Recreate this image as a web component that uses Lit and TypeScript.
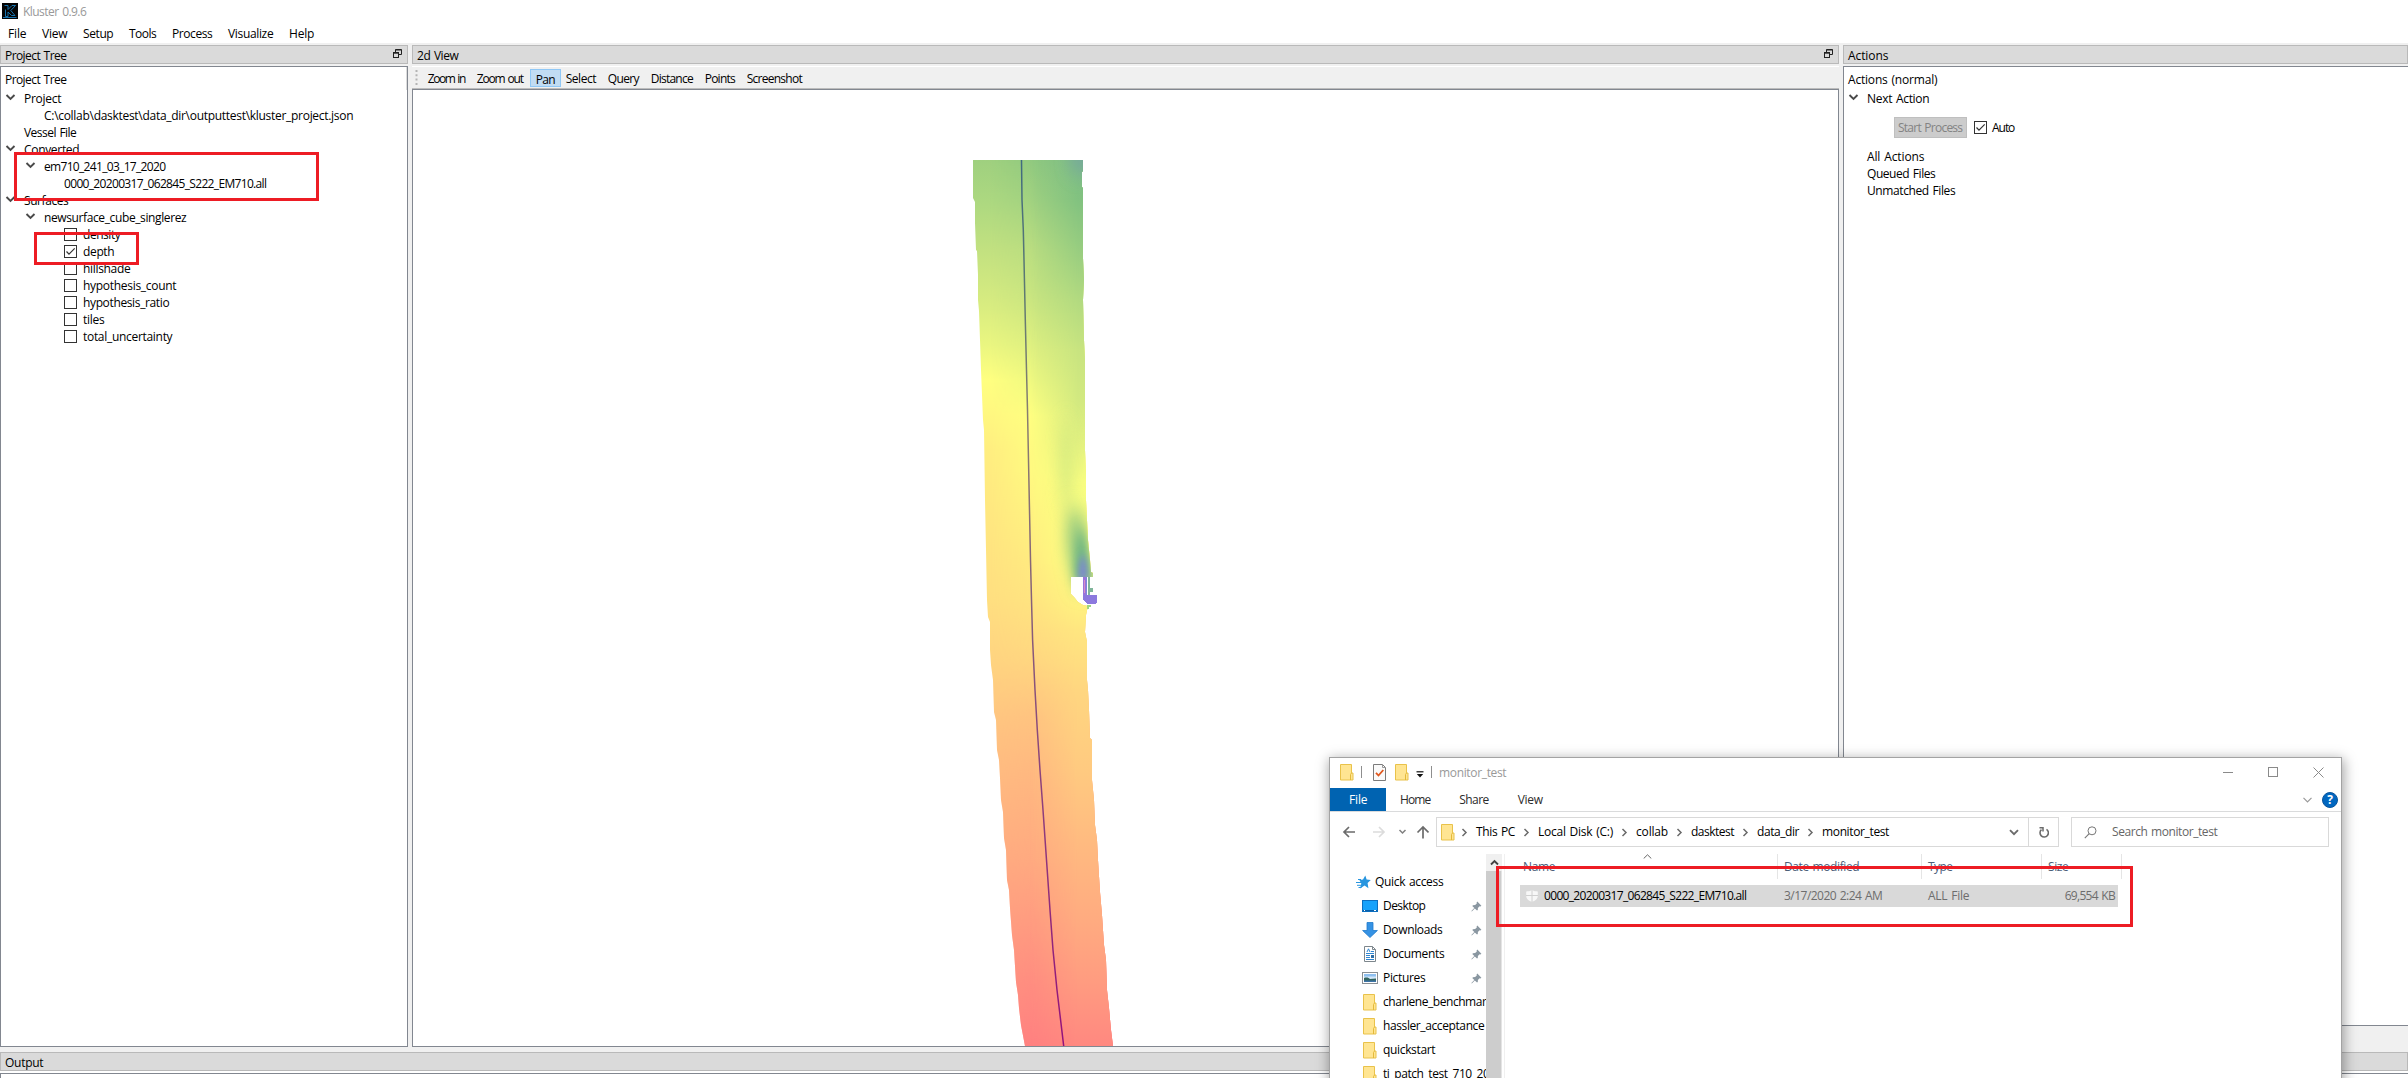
import { LitElement, html, svg, css, nothing } from 'lit';
import { customElement } from 'lit/decorators.js';
import { styleMap } from 'lit/directives/style-map.js';

const FAMILY = '"Open Sans", "Noto Sans", sans-serif';
const pen = document.createElement('canvas').getContext('2d')!;

/** A label tracked so that it takes up the given number of pixels. */
const label = (text: string, width: number) => {
  pen.font = `12px ${FAMILY}`;
  const spaces = text.split(' ').length - 1;
  const tracking = (width + 0.3 - spaces - pen.measureText(text).width) / text.length;
  return html`<span style=${styleMap({ letterSpacing: `${tracking.toFixed(3)}px` })}>${text}</span>`;
};

const shared = css`
  :host { display: block; font: 12px/17px "Open Sans", "Noto Sans", sans-serif; color: #000; }
  * { box-sizing: border-box; }
  svg { display: block; flex: none; }
  span { white-space: pre; word-spacing: 1px; }
`;

const chevronDown = html`<svg width="11" height="9" viewBox="0 0 11 9"><path d="M1.5 2 5.5 6 9.5 2" fill="none" stroke="#4a4a4a" stroke-width="1.9"/></svg>`;

const checkbox = (checked: boolean) => html`<svg width="13" height="13" viewBox="0 0 13 13">
  <rect x=".5" y=".5" width="12" height="12" fill="#fff" stroke="#333"/>
  ${checked ? svg`<path d="M2.5 6.5 5 9.2 10.7 3.4" fill="none" stroke="#333" stroke-width="1.2"/>` : nothing}
</svg>`;

const floatIcon = html`<svg width="9" height="9" viewBox="0 0 9 9" fill="none" stroke="#222">
  <path d="M2.5 3V.5h6v5H6"/><path d="M2.5 1h6" stroke-width="1"/><rect x=".5" y="3.5" width="5" height="5"/><path d="M.5 4.2h5"/>
</svg>`;

const folder = html`<svg width="14" height="17" viewBox="0 0 14 17">
  <path d="M.5.5h11v8.500h1.500v7H.5z" fill="#ffe592" stroke="#e9c24a"/>
  <path d="M10.500 16v-5.500l1-1.500" fill="none" stroke="#e3b93b"/>
</svg>`;

/* ---------- 2d view map ---------- */

type Stop = [number, string];
const TOP = 160;
const BOTTOM = 1046;
const WEST: Stop[] = [[160, '#9fd07f'], [200, '#acd880'], [250, '#c2e180'], [300, '#d6eb80'], [345, '#eaf680'], [380, '#ffff80'], [412, '#fff880'], [450, '#ffee80'], [520, '#ffe780'], [600, '#ffdf80'], [660, '#ffd480'], [735, '#ffc280'], [815, '#ffb480'], [890, '#ffa580'], [965, '#ff9680'], [1046, '#ff8680']];
const MIDDLE: Stop[] = [[160, '#90c97f'], [200, '#a0d180'], [250, '#b9dd80'], [300, '#c9e580'], [350, '#dff080'], [390, '#f2fa80'], [415, '#ffff80'], [470, '#fffb80'], [530, '#fff180'], [600, '#ffe480'], [660, '#ffd680'], [715, '#ffc380'], [775, '#ffb780'], [860, '#ffa980'], [925, '#ff9a80'], [983, '#ff8c80'], [1046, '#ff8080']];
const EAST: Stop[] = [[160, '#7ebd85'], [200, '#82c280'], [250, '#98cd80'], [300, '#b2da80'], [350, '#c8e480'], [400, '#d2e980'], [440, '#e2f180'], [480, '#f8fd80'], [560, '#ffff80'], [600, '#fff380'], [630, '#ffe680'], [690, '#ffd680'], [770, '#ffca80'], [845, '#ffba80'], [920, '#ffab80'], [980, '#ff9c80'], [1046, '#ff8880']];
const TRACK: Stop[] = [[160, '#3f6a80'], [300, '#5f7a72'], [420, '#8a7d70'], [600, '#85607a'], [800, '#8d3f7c'], [1046, '#93107c']];

const ramp = (id: string, stops: Stop[]) => svg`<linearGradient id=${id} gradientUnits="userSpaceOnUse" x1="0" x2="0" y1=${TOP} y2=${BOTTOM}>
  ${stops.map(([y, c]) => svg`<stop offset=${(y - TOP) / (BOTTOM - TOP)} stop-color=${c}/>`)}
</linearGradient>`;

const SWATH = '973,160 973,198 975,202 975,223 976,250 977,251 978,275 978,300 979,311 980,340 981,370 982,395 983,420 984,430 985,500 986,550 987,600 988,617 990,622 990,650 991,665 993,680 994,712 996,720 997,750 999,760 1000,778 1001,800 1003,812 1004,838 1006,850 1007,880 1009,890 1010,908 1012,935 1014,950 1016,982 1018,995 1019,1008 1021,1025 1025,1046 ' +
  '1113,1046 1111,1030 1109,1008 1107,990 1106,960 1104,945 1102,915 1100,892 1098,860 1097,840 1095,825 1094,800 1092,780 1092,740 1090,738 1089,710 1088,690 1087,680 1087,642 1085,632 1086,615 1088,606 1083,605 1078,602 1074,597 1071,594 1071,577 1093,577 1093,573 1091,572 1090,560 1088,540 1087,520 1086,500 1086,475 1085,450 1085,360 1084,340 1083,300 1084,280 1083,258 1083,188 1082,187 1082,172 1083,171 1083,160';

@customElement('map-canvas')
export class MapCanvas extends LitElement {
  static styles = css`:host { display: block; } svg { display: block; width: 100%; height: 100%; }`;
  render() {
    return html`<svg viewBox="413 90 1425 956" preserveAspectRatio="none">
      <defs>
        ${ramp('west', WEST)}${ramp('middle', MIDDLE)}${ramp('east', EAST)}${ramp('track', TRACK)}
        <linearGradient id="f1" gradientUnits="userSpaceOnUse" x1="990" x2="1038" y1="600" y2="600"><stop offset="0" stop-color="#000"/><stop offset="1" stop-color="#fff"/></linearGradient>
        <linearGradient id="f2" gradientUnits="userSpaceOnUse" x1="1030" x2="1078" y1="600" y2="600"><stop offset="0" stop-color="#000"/><stop offset="1" stop-color="#fff"/></linearGradient>
        <mask id="m1" maskUnits="userSpaceOnUse" x="960" y="150" width="170" height="900"><rect x="960" y="150" width="170" height="900" fill="url(#f1)"/></mask>
        <mask id="m2" maskUnits="userSpaceOnUse" x="960" y="150" width="170" height="900"><rect x="960" y="150" width="170" height="900" fill="url(#f2)"/></mask>
        <filter id="b9" x="-1" y="-1" width="3" height="3"><feGaussianBlur stdDeviation="7 11"/></filter>
        <filter id="b5" x="-1" y="-1" width="3" height="3"><feGaussianBlur stdDeviation="4 8"/></filter>
        <filter id="b3" x="-1" y="-1" width="3" height="3"><feGaussianBlur stdDeviation="3 5"/></filter>
        <clipPath id="swath"><polygon points=${SWATH} shape-rendering="crispEdges"/></clipPath>
      </defs>
      <g clip-path="url(#swath)">
        <rect x="960" y="150" width="170" height="900" fill="url(#west)"/>
        <rect x="960" y="150" width="170" height="900" fill="url(#middle)" mask="url(#m1)"/>
        <rect x="960" y="150" width="170" height="900" fill="url(#east)" mask="url(#m2)"/>
        <ellipse cx="1084" cy="158" rx="16" ry="12" fill="#74a4a0" filter="url(#b9)"/>
        <ellipse cx="1066" cy="465" rx="7" ry="45" fill="#cfe780" opacity=".75" filter="url(#b9)"/>
        <path d="M1066 510 1084 512 1094 585 1074 584 1066 550z" fill="#9fce80" filter="url(#b9)"/>
        <path d="M1077 534 1084 532 1092 585 1074 584z" fill="#6db582" filter="url(#b5)"/>
        <path d="M1081 557 1085 557 1088 580 1078 580z" fill="#7f84d8" filter="url(#b3)"/>
      </g>
      <g shape-rendering="crispEdges">
        <path d="M1083 577h3v18h-3z" fill="#9a74dc"/>
        <path d="M1084 580h1v13h-1z" fill="#d48fc8"/>
        <path d="M1088 577h2v11h3v4h-3v3h-2z" fill="#7fb59a"/>
        <path d="M1086 577h1v18h-1z" fill="#7d8ad8"/>
        <path d="M1083 595h13l1 1v6l-1 2h-9l-3-3-1-3z" fill="#8c79de"/>
        <path d="M1087 605h4v2h-2v2h-2z" fill="#9fd582"/>
      </g>
      <polyline points="1021.5,160 1022,200 1023.3,230 1024,260 1025.3,320 1026.5,370 1027.5,410 1028.5,460 1029.5,510 1030.5,560 1031.5,600 1032.6,640 1035,690 1037.3,730 1040,770 1043,810 1046.5,860 1050,910 1053,950 1057,990 1060,1015 1063.7,1046"
        fill="none" stroke="url(#track)" stroke-width="1.500"/>
    </svg>`;
  }
}

/* ---------- dock frame ---------- */

@customElement('dock-panel')
export class DockPanel extends LitElement {
  static properties = { heading: {}, span: { type: Number }, floatable: { type: Boolean } };
  declare heading: string;
  declare span: number;
  declare floatable: boolean;
  static styles = [shared, css`
    :host { display: flex; flex-direction: column; min-width: 0; }
    .bar { display: flex; flex: none; align-items: center; justify-content: space-between; height: 19px; padding: 1px 5px 0 4px;
      background: #dadada; border: 1px solid #b9b9b9; }
    .bar svg { margin-top: -3px; }
    .body { display: flex; flex-direction: column; flex: 1; min-height: 0; margin-top: 2px; }
  `];
  render() {
    return html`<div class="bar">${label(this.heading, this.span)}${this.floatable ? floatIcon : nothing}</div>
      <div class="body"><slot></slot></div>`;
  }
}

/* ---------- file explorer window ---------- */

const pin = html`<svg class="pin" width="11" height="11" viewBox="0 0 11 11"><path d="M6.3.6 10.4 4.7 9.4 5.4 8.6 5.2 6.9 6.9 6.8 9 6 9.6 3.8 7.4.8 10.5.4 10.1 3.3 7 1.3 4.9 2 4.2 4.1 4.1 5.8 2.4 5.6 1.4z" fill="#8a97a1"/></svg>`;
const star = html`<svg width="15" height="14" viewBox="0 0 15 14"><path d="M9.3.4 10.6 4.6 14.8 5 11.6 7.9 12.4 13.2 8.6 10.6 4 13.6 5.3 8.6 3.4 5 7 4.6z" fill="#2795df"/><path d="M2 4.5h3M0 7.5h5M1 10.3h4M2.5 12.5h3" stroke="#2795df" stroke-width="1"/></svg>`;
const desktop = html`<svg width="16" height="12" viewBox="0 0 16 12"><rect x=".5" y=".5" width="15" height="11" fill="#16a2fb" stroke="#0b6fc0"/><path d="M1 10.5h14" stroke="#0a5ea8"/><path d="M2 10.5h1M12 10.5h2" stroke="#fff"/></svg>`;
const download = html`<svg width="16" height="16" viewBox="0 0 16 16"><path d="M5 .5h6v8h4.4L8 15.5.6 8.500H5z" fill="#3592e4" stroke="#1f7acb" stroke-width=".8"/></svg>`;
const documents = html`<svg width="12" height="16" viewBox="0 0 12 16"><path d="M.5.5h8l3 3v12H.5z" fill="#fff" stroke="#7d868c"/><path d="M8.500.5v3h3" fill="none" stroke="#7d868c"/><path d="M3 6 4.500 2.800 6 6M7 5.500h3M2 7.500h8M2 9.500h4M2 11.500h4M2 13.500h8" stroke="#2f86d2" fill="none"/><path d="M7 9h3v3H7z" fill="#2d6fa8"/></svg>`;
const pictures = html`<svg width="16" height="12" viewBox="0 0 16 12"><rect x=".5" y=".5" width="15" height="11" fill="#fff" stroke="#8a8f94"/><path d="M2 2h12v8H2z" fill="#8fc0f0"/><path d="M2 4.500h12V7H2z" fill="#d4e8fa"/><path d="M2 6c3-1 5 0 6 1l6-.5V10H2z" fill="#33655f"/><path d="M2 8.500h12V10H2z" fill="#3e74a8"/></svg>`;
const crumbArrow = html`<svg class="crumb" width="23" height="9" viewBox="0 0 23 9"><path d="M9.500 1 13 4.500 9.500 8" fill="none" stroke="#6a6a6a" stroke-width="1.500"/></svg>`;

@customElement('explorer-window')
export class ExplorerWindow extends LitElement {
  static styles = [shared, css`
    :host { display: flex; flex-direction: column; background: #fff; border: 1px solid #a3a3a3; }
    .title { display: flex; align-items: center; height: 30px; flex: none; padding: 0 0 2px 10px; color: #999; }
    .sep { width: 1px; height: 12px; background: #8e8e8e; }
    .title .folder1 { margin-right: 7px; }
    .title .doc { margin: 0 9px 0 11px; }
    .title .drop { margin: 4px 7px 0 7px; }
    .title .sep2 { margin-right: 7px; }
    .controls { display: flex; align-items: center; margin: 0 17px 0 auto; gap: 35px; }
    .tabs { display: flex; align-items: center; height: 24px; flex: none; border-bottom: 1px solid #dadbdc; color: #2b2b2b; }
    .file { width: 56px; height: 23px; background: #0063b1; color: #fff; padding: 3px 0 0 19px; margin-right: 14px; }
    .tabs .gap { margin-right: 29px; }
    .help { width: 16px; height: 16px; border-radius: 8px; background: #0067c0; border: 1px solid #0a559c; color: #fff; font-weight: 700; line-height: 14px; text-align: center; margin: 0 3px 0 10px; }
    .tabs .fold { margin-left: auto; }
    .nav { display: flex; align-items: center; height: 42px; flex: none; padding: 0 12px 2px 12px; }
    .nav span { padding-bottom: 1px; }
    .box { display: flex; align-items: center; height: 30px; border: 1px solid #d9d9d9; }
    .address { width: 623px; margin-left: 7px; padding-left: 4px; }
    .address .lead { margin-right: -2px; }
    .address .more { margin-left: auto; margin-right: 9px; }
    .refresh { display: flex; align-items: center; justify-content: center; width: 30px; height: 28px; border-left: 1px solid #d9d9d9; }
    .search { width: 258px; margin-left: 12px; padding-left: 12px; gap: 15px; color: #666; }
    .main { display: flex; flex: 1; min-height: 0; }
    .side { width: 156px; flex: none; padding-top: 16px; overflow: hidden; }
    .row { display: flex; align-items: center; height: 24px; padding-left: 32px; overflow: hidden; }
    .row span { padding-bottom: 1px; }
    .row.top { padding-left: 26px; gap: 4px; }
    .ico { display: flex; justify-content: center; width: 16px; flex: none; margin-right: 5px; }
    .row .pin { margin: 0 4px 0 auto; }
    .scroll { width: 16px; flex: none; background: #f0f0f0; display: flex; flex-direction: column; align-items: center; }
    .arrow { height: 17px; padding-top: 4px; }
    .thumb { width: 16px; flex: 1; background: #cdcdcd; border-right: 1px solid #e4e4e4; }
    .files { flex: 1; margin-left: 2px; border-left: 1px solid #f0f0f0; }
    .head { display: flex; height: 25px; color: #4c607a; }
    .head div { display: flex; align-items: center; border-right: 1px solid #e5e5e5; padding-left: 6px; }
    .head .name { width: 273px; padding-left: 18px; }
    .head .name svg { margin: -20px 0 0 88px; }
    .date { width: 144px; } .type { width: 120px; } .size { width: 80px; }
    .item { display: flex; align-items: center; height: 22px; width: 598px; margin: 6px 0 0 15px; padding: 0 3px 1px 6px; background: #d9d9d9; color: #6d6d6d; }
    .item .fname { width: 240px; color: #000; margin-left: 6px; }
    .item .date { width: 144px; }
    .item .size { margin-left: auto; width: auto; }
  `];
  render() {
    const quick: [unknown, string, number, boolean][] = [
      [desktop, 'Desktop', 42, true], [download, 'Downloads', 59, true], [documents, 'Documents', 61, true], [pictures, 'Pictures', 42, true],
      [folder, 'charlene_benchmark', 109, false], [folder, 'hassler_acceptance', 101, false], [folder, 'quickstart', 52, false], [folder, 'tj_patch_test_710_2020', 119, false],
    ];
    const crumbs: [string, number][] = [['This PC', 39], ['Local Disk (C:)', 75], ['collab', 32], ['dasktest', 43], ['data_dir', 42], ['monitor_test', 67]];
    return html`
      <div class="title">
        <div class="folder1">${folder}</div><div class="sep"></div>
        <svg class="doc" width="13" height="17" viewBox="0 0 13 17"><path d="M.5.5h9l3 3v13H.5z" fill="#fafafa" stroke="#7b7b7b"/><path d="M9.500.5v3h3" fill="none" stroke="#9a9a9a"/><path d="M3 8.800 5.500 11.500 10.300 6" fill="none" stroke="#e0571d" stroke-width="1.800"/></svg>
        ${folder}
        <svg class="drop" width="8" height="7" viewBox="0 0 8 7"><path d="M.5.800h7" stroke="#111" stroke-width="1.200"/><path d="M.8 3h6.400L4 6.400z" fill="#111"/></svg>
        <div class="sep sep2"></div>
        ${label('monitor_test', 67)}
        <div class="controls">
          <svg width="10" height="10" viewBox="0 0 10 10"><path d="M0 5.500h10" stroke="#8a8a8a"/></svg>
          <svg width="10" height="10" viewBox="0 0 10 10"><rect x=".5" y=".5" width="9" height="9" fill="none" stroke="#8a8a8a"/></svg>
          <svg width="11" height="11" viewBox="0 0 11 11"><path d="M.5.5l10 10M10.500.5l-10 10" stroke="#8a8a8a"/></svg>
        </div>
      </div>
      <div class="tabs">
        <div class="file">${label('File', 18)}</div>
        <div class="gap">${label('Home', 30)}</div><div class="gap">${label('Share', 29)}</div><div>${label('View', 25)}</div>
        <svg class="fold" width="9" height="6" viewBox="0 0 9 6"><path d="M.5.800 4.500 4.800 8.500.800" fill="none" stroke="#9a9a9a" stroke-width="1.200"/></svg>
        <div class="help">?</div>
      </div>
      <div class="nav">
        <svg width="87" height="14" viewBox="0 0 87 14" fill="none" stroke-width="1.700">
          <path d="M13 7H2M7 2 2 7l5 5" stroke="#6b6b6b"/><path d="M31 7h11M37 2l5 5-5 5" stroke="#dcdcdc"/>
          <path d="M57.500 5 60.500 8 63.500 5" stroke="#808080" stroke-width="1.500"/><path d="M81 13.500V2M75.500 7.500 81 2l5.500 5.500" stroke="#6b6b6b"/>
        </svg>
        <div class="box address">
          <div class="lead">${folder}</div>${crumbs.map(([name, w]) => html`${crumbArrow}${label(name, w - 0.3)}`)}
          <svg class="more" width="10" height="7" viewBox="0 0 10 7"><path d="M1 1.200 5 5.200 9 1.200" fill="none" stroke="#6b6b6b" stroke-width="1.900"/></svg>
          <div class="refresh"><svg width="11" height="12" viewBox="0 0 11 12"><path d="M8.500 3.300a4.200 4.200 0 1 1-5 .3" fill="none" stroke="#6b6b6b" stroke-width="1.600"/><path d="M1.500 1.800H5V5.500" fill="none" stroke="#6b6b6b" stroke-width="1.500"/></svg></div>
        </div>
        <div class="box search">
          <svg width="13" height="13" viewBox="0 0 13 13"><circle cx="8" cy="4.800" r="4" fill="none" stroke="#777"/><path d="M5.200 7.700.800 12.200" stroke="#777" stroke-width="1.100"/></svg>
          ${label('Search monitor_test', 105)}
        </div>
      </div>
      <div class="main">
        <div class="side">
          <div class="row top">${star}${label('Quick access', 68)}</div>
          ${quick.map(([icon, name, w, pinned]) => html`<div class="row"><div class="ico">${icon}</div>${label(name, w)}${pinned ? pin : nothing}</div>`)}
        </div>
        <div class="scroll">
          <div class="arrow"><svg width="9" height="9" viewBox="0 0 9 9"><path d="M1 6.500 4.500 3 8 6.500" fill="none" stroke="#444" stroke-width="1.900"/></svg></div>
          <div class="thumb"></div>
        </div>
        <div class="files">
          <div class="head">
            <div class="name">${label('Name', 32)}<svg width="9" height="5" viewBox="0 0 9 5"><path d="M.7 4.500 4.500.800 8.300 4.500" fill="none" stroke="#666"/></svg></div>
            <div class="date">${label('Date modified', 75)}</div>
            <div class="type">${label('Type', 24)}</div>
            <div class="size">${label('Size', 20)}</div>
          </div>
          <div class="item">
            <svg width="12" height="12" viewBox="0 0 12 12"><path d="M6 0c2 1.200 4 1.400 5.800 1.400V6c0 3-3 5-5.800 6C3.200 11 .2 9 .2 6V1.400C2 1.400 4 1.200 6 0z" fill="#f7f7f7"/><path d="M6 0v12M0 5.500h12" stroke="#d0d0d0"/></svg>
            <div class="fname">${label('0000_20200317_062845_S222_EM710.all', 202)}</div>
            <div class="date">${label('3/17/2020 2:24 AM', 98)}</div>
            <div>${label('ALL File', 41)}</div>
            <div class="size">${label('69,554 KB', 50)}</div>
          </div>
        </div>
      </div>`;
  }
}

/* ---------- application ---------- */

interface Node { text: string; width: number; depth: number; open?: boolean; checked?: boolean; }

@customElement('app-root')
export class AppRoot extends LitElement {
  static styles = [shared, css`
    :host { display: block; }
    .app { position: relative; display: flex; flex-direction: column; width: 2408px; height: 1078px; overflow: hidden; background: #fff; }
    .title { display: flex; align-items: center; gap: 5px; height: 25px; padding: 0 0 2px 2px; color: #999; flex: none; }
    .title svg { margin-top: -1px; }
    .menu { display: flex; gap: 15.7px; height: 18px; padding-left: 8px; flex: none; }
    .work { display: flex; gap: 4px; flex: none; height: 1009px; padding-top: 2px; background: #f0f0f0; }
    .tree-dock { width: 408px; height: 1002px; }
    .map-dock { width: 1427px; height: 1002px; }
    .action-dock { flex: 1; height: 981px; }
    .frame { flex: 1; background: #fff; border: 1px solid #828790; min-height: 0; }
    .action-dock .frame { border-right: 0; }
    .header { height: 23px; padding: 4px 0 0 4px; }
    .tree-dock .header { border-right: 1px solid #dcdcdc; }
    .node { display: flex; align-items: center; height: 17px; }
    .twig { width: 20px; height: 17px; flex: none; padding: 3px 0 0 1px; }
    .twig.inner { margin-left: 20px; }
    .in0 { padding-left: 3px; } .in1 { padding-left: 3px; } .in2 { padding-left: 43px; }
    .pad { width: 20px; flex: none; }
    .node .box { padding-bottom: 1px; margin-right: 6px; }
    .tools { display: flex; align-items: center; height: 23px; padding: 0 0 0 3px; background: #f0f0f0; border-top: 1px solid #fff; border-bottom: 1px solid #bcbcbc; gap: 11.7px; flex: none; }
    .tools svg { margin-right: -2px; }
    .tool { padding-top: 1px; }
    .pan { height: 18px; padding: 1px 5px 0; background: #c1dcf3; border: 1px solid #90c8f6; margin: 0 -7px 0 -5px; }
    .run { display: flex; align-items: center; height: 41px; padding-left: 50px; gap: 5px; }
    .start { height: 21px; width: 73px; background: #cccccc; border: 1px solid #bfbfbf; color: #838383; padding: 1px 0 0 3px; margin-right: 2px; }
    .output { flex: 1; }
    .output .frame { border-right: 0; border-bottom: 0; }
    .mark { position: absolute; border: 3px solid #ed1c24; }
    .m1 { left: 14px; top: 152px; width: 305px; height: 49px; }
    .m2 { left: 34px; top: 232px; width: 105px; height: 33px; }
    .m3 { left: 1496px; top: 866px; width: 637px; height: 61px; }
    explorer-window { position: absolute; left: 1329px; top: 757px; width: 1013px; height: 330px; box-shadow: 1px 3px 12px 1px rgba(0,0,0,.36); }
  `];

  private nodes: Node[] = [
    { text: 'Project', width: 37, depth: 0, open: true },
    { text: 'C:\\collab\\dasktest\\data_dir\\outputtest\\kluster_project.json', width: 309, depth: 1 },
    { text: 'Vessel File', width: 52, depth: 0 },
    { text: 'Converted', width: 55, depth: 0, open: true },
    { text: 'em710_241_03_17_2020', width: 121, depth: 1, open: true },
    { text: '0000_20200317_062845_S222_EM710.all', width: 202, depth: 2 },
    { text: 'Surfaces', width: 44, depth: 0, open: true },
    { text: 'newsurface_cube_singlerez', width: 142, depth: 1, open: true },
    { text: 'density', width: 37, depth: 2, checked: false },
    { text: 'depth', width: 31, depth: 2, checked: true },
    { text: 'hillshade', width: 47, depth: 2, checked: false },
    { text: 'hypothesis_count', width: 93, depth: 2, checked: false },
    { text: 'hypothesis_ratio', width: 86, depth: 2, checked: false },
    { text: 'tiles', width: 21, depth: 2, checked: false },
    { text: 'total_uncertainty', width: 89, depth: 2, checked: false },
  ];

  private node(n: Node) {
    return html`<div class="node in${n.depth}">
      ${n.depth < 2 ? html`<div class="twig ${n.depth ? 'inner' : ''}">${n.open ? chevronDown : nothing}</div>` : html`<div class="pad"></div>`}
      ${n.checked === undefined ? nothing : html`<div class="box">${checkbox(n.checked)}</div>`}
      ${label(n.text, n.width)}
    </div>`;
  }

  render() {
    const menu: [string, number][] = [['File', 18], ['View', 25], ['Setup', 30], ['Tools', 27], ['Process', 40], ['Visualize', 45], ['Help', 25]];
    const tools: [string, number][] = [['Zoom in', 37], ['Zoom out', 46], ['Pan', 19], ['Select', 30], ['Query', 31], ['Distance', 42], ['Points', 30], ['Screenshot', 55]];
    return html`<div class="app">
      <div class="title">
        <svg width="16" height="16" viewBox="0 0 16 16"><path d="M0 0h16v16H0z" fill="#050505"/><path d="M2.500 2.500h3.500v4L10 2.500h3.500L8.800 7.500l4.200 5h-3.500L6 9v4.500H3.500V6.500M1 14.500h13.500" fill="none" stroke="#1a7fc0" stroke-width=".9"/></svg>
        ${label('Kluster 0.9.6', 63)}
      </div>
      <div class="menu">${menu.map(([m, w]) => label(m, w))}</div>
      <div class="work">
        <dock-panel class="tree-dock" .heading=${'Project Tree'} .span=${61} floatable>
          <div class="frame">
            <div class="header">${label('Project Tree', 61)}</div>
            ${this.nodes.map((n) => this.node(n))}
          </div>
        </dock-panel>
        <dock-panel class="map-dock" .heading=${'2d View'} .span=${41} floatable>
          <div class="tools">
            <svg width="3" height="15" viewBox="0 0 3 15"><path d="M1.500 0v15" stroke="#b4b4b4" stroke-width="2" stroke-dasharray="2 2.300"/></svg>
            ${tools.map(([t, w]) => html`<div class=${t === 'Pan' ? 'pan' : 'tool'}>${label(t, w)}</div>`)}
          </div>
          <map-canvas class="frame"></map-canvas>
        </dock-panel>
        <dock-panel class="action-dock" .heading=${'Actions'} .span=${40}>
          <div class="frame">
            <div class="header">${label('Actions (normal)', 89)}</div>
            ${this.node({ text: 'Next Action', width: 62, depth: 0, open: true })}
            <div class="run"><div class="start">${label('Start Process', 64)}</div>${checkbox(true)}${label('Auto', 22)}</div>
            ${this.node({ text: 'All Actions', width: 57, depth: 0 })}
            ${this.node({ text: 'Queued Files', width: 68, depth: 0 })}
            ${this.node({ text: 'Unmatched Files', width: 88, depth: 0 })}
          </div>
        </dock-panel>
      </div>
      <dock-panel class="output" .heading=${'Output'} .span=${38}><div class="frame"></div></dock-panel>
      <explorer-window></explorer-window>
      <div class="mark m1"></div><div class="mark m2"></div><div class="mark m3"></div>
    </div>`;
  }
}
